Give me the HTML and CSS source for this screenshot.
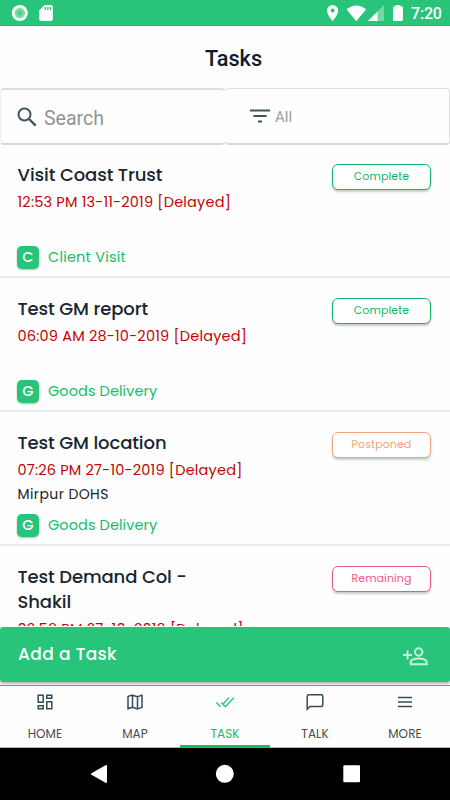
FILE: index.html
```html
<!DOCTYPE html>
<html lang="en">
<head>
<meta charset="utf-8">
<title>Tasks</title>
<link rel="stylesheet" href="styles.css">
</head>
<body>
<div class="screen">
  <div class="status">
    <svg class="status-left" width="60" height="26" viewBox="0 0 60 26">
      <circle cx="19.8" cy="13" r="8" fill="#fff"/><circle cx="19.8" cy="13" r="5.3" fill="#7bdcaa"/><circle cx="19.8" cy="13" r="2.6" fill="#4fcf8e"/>
      <path d="M44.5 5H51a1.8 1.8 0 0 1 1.800 1.800v12.400A1.800 1.800 0 0 1 51 21H41a1.800 1.800 0 0 1-1.800-1.800v-9z" fill="#fff"/>
      <path d="M45.3 7v3M47.9 7v3M50.400 7v3" stroke="#27c47a" stroke-width="1.3"/>
    </svg>
    <svg class="status-right" width="80" height="26" viewBox="325 0 80 26">
      <path fill-rule="evenodd" d="M332.6 5a5.600 5.600 0 0 0-5.600 5.600c0 4.200 5.600 10.600 5.600 10.600s5.600-6.400 5.600-10.600a5.600 5.600 0 0 0-5.600-5.600zm0 3.600a2 2 0 1 1 0 4 2 2 0 0 1 0-4z" fill="#fff"/>
      <path d="M346.5 9.200Q356.3 1.600 366.2 9.200L356.3 21.200z" fill="#fff"/>
      <path d="M384 5v16h-16z" fill="#72d9a6"/><path d="M377.5 11.500V21H368z" fill="#fff"/>
      <path d="M395.500 5h5v1.500h1.600q.8 0 .8.800v12.900q0 .8-.8.800h-8.300q-.8 0-.8-.8V7.300q0-.8.800-.8h1.700z" fill="#fff"/>
    </svg>
    <span class="clock">7:20</span>
  </div>
  <header class="header">Tasks</header>
  <div class="filters">
    <div class="filter search">
      <svg width="20" height="20" viewBox="0 0 20 20" fill="none" stroke="#40545f" stroke-width="2"><circle cx="7.500" cy="7.500" r="6"/><path d="M12 12l6.700 6.700" stroke-width="2.400"/></svg>
      <span>Search</span>
    </div>
    <div class="filter kind">
      <svg width="20" height="14" viewBox="0 0 20 14" stroke="#40545f" stroke-width="2"><path d="M0 1.500h20M3.500 7h13M8 12.500h4"/></svg>
      <span>All</span>
    </div>
  </div>
  <main class="list">
    <article class="task">
      <div class="info"><h2>Visit Coast Trust</h2><p class="date">12:53 PM 13-11-2019 [Delayed]</p><div class="type"><b>C</b><span class="client">Client Visit</span></div></div>
      <span class="pill complete">Complete</span>
    </article>
    <article class="task">
      <div class="info"><h2>Test GM report</h2><p class="date">06:09 AM 28-10-2019 [Delayed]</p><div class="type"><b>G</b><span>Goods Delivery</span></div></div>
      <span class="pill complete">Complete</span>
    </article>
    <article class="task">
      <div class="info"><h2>Test GM location</h2><p class="date">07:26 PM 27-10-2019 [Delayed]</p><p class="place">Mirpur DOHS</p><div class="type"><b>G</b><span>Goods Delivery</span></div></div>
      <span class="pill postponed">Postponed</span>
    </article>
    <article class="task">
      <div class="info"><h2>Test Demand Col -<br>Shakil</h2><p class="date">02:58 PM 27-10-2019 [Delayed]</p></div>
      <span class="pill remaining">Remaining</span>
    </article>
  </main>
  <div class="add">
    <span>Add a Task</span>
    <svg width="25" height="19" viewBox="0 0 25 19" fill="none" stroke="#c9f1dd" stroke-width="2"><circle cx="15.700" cy="5" r="3.700"/><path d="M7.700 17.200v-2.100c0-2.300 4.300-3.600 8-3.600s8 1.300 8 3.600v2.100zM0 8h9M4.500 3.500v9"/></svg>
  </div>
  <nav class="tabs">
    <div class="tab"><svg viewBox="0 0 20 20"><path d="M3.200 3.200h5v7h-5zM11.800 3.200h5v3h-5zM11.800 9.800h5v7h-5zM3.200 13.800h5v3h-5z"/></svg><span>HOME</span></div>
    <div class="tab"><svg viewBox="0 0 20 20"><path d="M3 4.600 Q5.500 3.200 7.500 3.200 L12.500 4.800 Q15 3.800 17 3.300V15.400Q15 16 12.500 16.900L7.500 15.300Q5 15.900 3 16.700zM7.500 3.200v12.100M12.500 4.800v12.100"/></svg><span>MAP</span></div>
    <div class="tab active"><svg viewBox="0 0 20 20"><path d="M1.300 10.500l4.200 4.200M6.200 10.500l4.200 4.200L18.800 5.700M7.900 12.300L13.900 5.800"/></svg><span>TASK</span></div>
    <div class="tab"><svg viewBox="0 0 20 20"><path d="M2.200 17.200V4.200Q2.200 2.700 3.700 2.700h12.600q1.500 0 1.500 1.500v8.800q0 1.500-1.500 1.500H5z"/></svg><span>TALK</span></div>
    <div class="tab"><svg viewBox="0 0 20 20"><path d="M3 5.500h14M3 10h14M3 14.500h14"/></svg><span>MORE</span></div>
  </nav>
  <div class="system">
    <svg width="450" height="52" viewBox="0 0 450 52" fill="#fff" stroke="#fff" stroke-width="2" stroke-linejoin="round"><path d="M92 26l14-8v16z"/><circle cx="224.800" cy="25.800" r="8"/><path d="M344.300 18.300h14.700v15h-14.700z"/></svg>
  </div>
</div>
</body>
</html>
```

FILE: styles.css
```css
* { box-sizing: border-box; }
body { margin: 0; background: #fff; font-family: Poppins, Inter, sans-serif; font-feature-settings: "cv11"; }
h2, p { margin: 0; }
.screen { width: 450px; height: 800px; overflow: hidden; display: flex; flex-direction: column; background: #fefefe; }
.status { height: 26px; flex: none; display: flex; background: #27c47a; border-bottom: 1px solid #19b96c; }
.status-right { margin-left: auto; }
.clock { width: 45px; padding-left: 6px; font: 500 16px/27px Roboto, sans-serif; color: #fff; letter-spacing: -.2px; }
.header { height: 62px; flex: none; text-align: center; font: 500 21.700px/65px Roboto, sans-serif; color: #101b2d; padding-left: 17px; }
.filters { height: 57px; flex: none; display: flex; font-family: Roboto, sans-serif; }
.filter { display: flex; align-items: center; border: 1px solid #dedede; border-bottom: 2px solid #d8d8d8; border-radius: 4px; }
.search { width: 225px; border-top-width: 2px; border-left-color: #eee; border-right: 0; padding-left: 16px; color: #929292; font-size: 19.500px; }
.search span { margin-left: 7px; padding-top: 3px; }
.kind { width: 225px; border-left: 0; padding-left: 25px; color: #98a0a5; font-size: 15px; }
.kind span { margin-left: 5px; padding-top: 2px; }
.list { height: 482px; flex: none; overflow: hidden; margin-top: -1px; margin-bottom: 1px; }
.task { height: 134px; padding: 18px 19px 7px 17.500px; border-bottom: 2px solid #e7ebea; display: flex; justify-content: space-between; }
.info { display: flex; flex-direction: column; white-space: nowrap; }
.task h2 { font-size: 18px; font-weight: 500; line-height: 25px; color: #172631; letter-spacing: -.1px; }
.date { margin-top: 3px; font-size: 14.500px; line-height: 24px; color: #c00505; letter-spacing: .2px; }
.place { font-size: 14px; line-height: 25px; color: #1b2229; letter-spacing: .4px; }
.type { display: flex; align-items: center; height: 23px; margin-top: auto; margin-left: -.5px; color: #15bd68; font-size: 14.500px; letter-spacing: .08px; }
.client { letter-spacing: .2px; }
.type b { width: 22px; height: 23px; border-radius: 5px; background: #27c47a; color: #fff; font-weight: 500; line-height: 23px; text-align: center; margin-right: 9px; box-shadow: 0 1px 2px #bbb; }
.pill { width: 99px; height: 26px; margin: 2px 0 0; border: 1px solid; border-radius: 6px; background: #fff; text-align: center; font-size: 11px; letter-spacing: .1px; line-height: 23px; box-shadow: 0 2px 2px #ccc; }
.complete { color: #12b563; }
.postponed { color: #f3a37a; }
.remaining { color: #ed5790; }
.add { height: 55px; flex: none; display: flex; justify-content: space-between; align-items: center; padding: 0 22px 0 18px; background: #27c47a; border-radius: 3px; color: #fff; font-size: 17px; font-weight: 500; letter-spacing: .4px; box-shadow: 0 2px 2px #bbb; }
.add span { padding-bottom: 2px; }
.add svg { margin-top: 3px; }
.tabs { height: 63px; margin-top: 3px; flex: none; display: flex; border-top: 1px solid #7d878c; border-bottom: 1px solid #b5b5b5; }
.tab { width: 90px; height: 62px; display: flex; flex-direction: column; align-items: center; padding-top: 6px; color: #4b4b4b; font-size: 12px; letter-spacing: .1px; }
.tab svg { width: 20px; height: 20px; fill: none; stroke: #354c57; stroke-width: 1.500; }
.tab span { margin-top: 14px; line-height: 16px; }
.tab.active { color: #15bd68; border-bottom: 3px solid #15bd68; }
.tab.active svg { stroke: #27c47a; stroke-width: 1.300; }
.system { height: 52px; flex: none; background: #000; }
.system svg { display: block; }
```
